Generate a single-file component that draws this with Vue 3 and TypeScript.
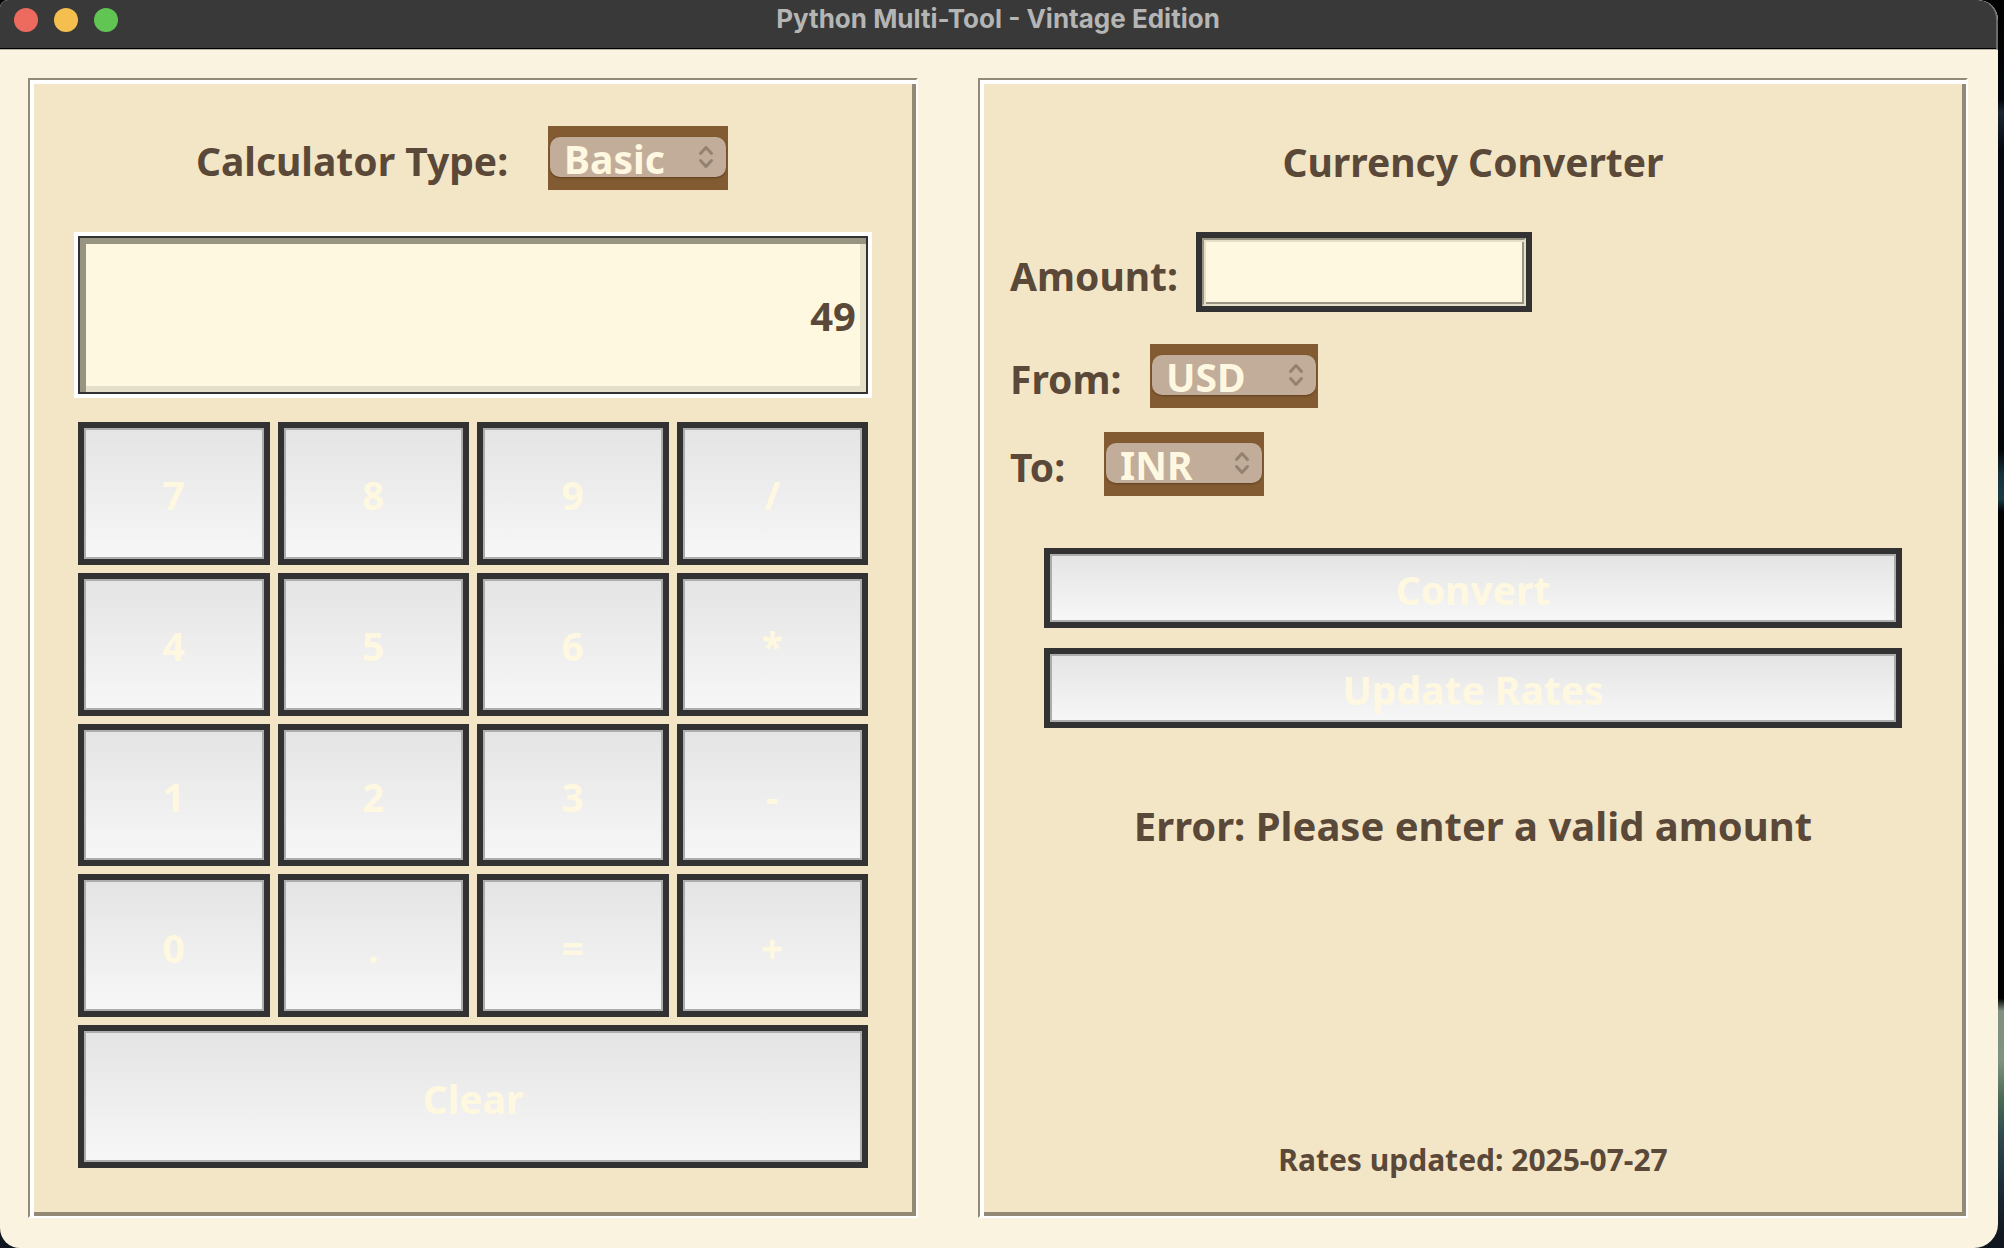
<script setup lang="ts">
import { ref } from 'vue'

const calculatorTypes = ['Basic', 'Scientific']
const currencies = ['USD', 'INR', 'EUR', 'GBP', 'JPY']
const keys = ['7', '8', '9', '/', '4', '5', '6', '*', '1', '2', '3', '-', '0', '.', '=', '+']

const calculatorType = ref('Basic')
const display = ref('49')
const amount = ref('')
const fromCurrency = ref('USD')
const toCurrency = ref('INR')
const result = ref('Error: Please enter a valid amount')
const ratesDate = '2025-07-27'

function press(key: string) {
  if (key === '=') return
  display.value += key
}

function clearDisplay() {
  display.value = ''
}

function convert() {
  if (!Number(amount.value)) result.value = 'Error: Please enter a valid amount'
}
</script>

<template>
  <div class="desktop">
    <div class="window">
      <header class="titlebar">
        <div class="lights">
          <button class="light close" type="button" aria-label="Close"></button>
          <button class="light minimize" type="button" aria-label="Minimize"></button>
          <button class="light zoom" type="button" aria-label="Zoom"></button>
        </div>
        <h1 class="title">Python Multi-Tool - Vintage Edition</h1>
      </header>

      <main class="content">
        <section class="panel calculator">
          <div class="type-row">
            <label for="calc-type">Calculator Type:</label>
            <div class="picker wide">
              <select id="calc-type" v-model="calculatorType">
                <option v-for="type in calculatorTypes" :key="type">{{ type }}</option>
              </select>
              <svg class="arrows" viewBox="0 0 16 24" aria-hidden="true">
                <path d="M2.5 8.5 8 2.5 13.5 8.5M2.5 15.5 8 21.5 13.5 15.5" />
              </svg>
            </div>
          </div>

          <div class="display-frame">
            <input v-model="display" class="display" type="text" aria-label="Display" />
          </div>

          <div class="keypad">
            <button v-for="key in keys" :key="key" class="key" type="button" @click="press(key)">{{ key }}</button>
            <button class="key clear" type="button" @click="clearDisplay">Clear</button>
          </div>
        </section>

        <section class="panel converter">
          <h2 class="heading">Currency Converter</h2>

          <div class="field">
            <label class="amount-label" for="amount">Amount:</label>
            <div class="amount-frame">
              <input id="amount" v-model="amount" class="amount" type="text" />
            </div>
          </div>
          <div class="field">
            <label class="from-label" for="from">From:</label>
            <div class="picker medium">
              <select id="from" v-model="fromCurrency">
                <option v-for="code in currencies" :key="code">{{ code }}</option>
              </select>
              <svg class="arrows" viewBox="0 0 16 24" aria-hidden="true">
                <path d="M2.5 8.5 8 2.5 13.5 8.5M2.5 15.5 8 21.5 13.5 15.5" />
              </svg>
            </div>
          </div>
          <div class="field">
            <label class="to-label" for="to">To:</label>
            <div class="picker narrow">
              <select id="to" v-model="toCurrency">
                <option v-for="code in currencies" :key="code">{{ code }}</option>
              </select>
              <svg class="arrows" viewBox="0 0 16 24" aria-hidden="true">
                <path d="M2.5 8.5 8 2.5 13.5 8.5M2.5 15.5 8 21.5 13.5 15.5" />
              </svg>
            </div>
          </div>

          <div class="actions">
            <button class="key" type="button" @click="convert">Convert</button>
            <button class="key" type="button">Update Rates</button>
          </div>

          <p class="result">{{ result }}</p>
          <p class="updated">Rates updated: {{ ratesDate }}</p>
        </section>
      </main>
    </div>
  </div>
</template>

<style>
body {
  margin: 0;
  background: #000;
}
</style>

<style scoped>
.desktop {
  box-sizing: border-box;
  min-height: 100vh;
  padding-right: 6px;
  display: flex;
  background: linear-gradient(
    180deg, #000 0%, #02060b 8%, #1a2634 9%, #04080e 12%, #05090f 20%, #020508 36%, #16323c 38%, #1a3a44 40%,
    #010203 41%, #020406 52%, #000 54%, #000 80%, #80917f 81%, #7f937f 85%, #4b6b55 88%, #2f4a50 91%,
    #1b2c38 95%, #10161f 99%
  );
}

.window {
  flex: 1;
  display: flex;
  flex-direction: column;
  border-radius: 8px 20px 24px 20px;
  overflow: hidden;
  background: #faf3e0;
  color: #5a4838;
  font-family: "Noto Sans", sans-serif;
  font-size: 39px;
  font-weight: 700;
  line-height: 48px;
}

.titlebar {
  box-sizing: border-box;
  height: 50px;
  display: grid;
  grid-template-columns: 1fr auto 1fr;
  align-items: start;
  background: #383938;
  border-bottom: 1px solid #b9b4a6;
  border-right: 2px solid #6b6b6b;
  border-top-right-radius: 20px;
  box-shadow: inset 0 -1px #000;
}

.lights {
  display: flex;
  gap: 16px;
  padding: 8px 14px;
}

.light {
  width: 24px;
  height: 24px;
  padding: 0;
  border: 0;
  border-radius: 50%;
}

.close { background: #ed6a5e; }
.minimize { background: #f5bf4f; }
.zoom { background: #61c554; }

.title {
  margin: 0;
  font-family: Inter, sans-serif;
  font-size: 26px;
  font-weight: 700;
  line-height: 38px;
  color: #b4b5b4;
}

.content {
  flex: 1;
  display: grid;
  grid-template-columns: 89fr 99fr;
  gap: 60px;
  padding: 28px 30px 30px 28px;
}

.panel {
  box-sizing: border-box;
  min-width: 0;
  display: flex;
  flex-direction: column;
  border: 2px solid;
  border-color: #928a76 #fff #fff #928a76;
  box-shadow: inset 4px 4px #fff, inset -4px -4px #928a76;
  background: #f3e6c6;
}

.calculator {
  padding: 46px 48px 48px;
}

.converter {
  padding: 46px 30px 32px;
}

.type-row {
  display: flex;
  align-items: center;
  justify-content: center;
  gap: 40px;
  padding-right: 22px;
  margin-bottom: 42px;
}

label {
  padding-top: 6px;
}

.picker {
  position: relative;
  box-sizing: border-box;
  height: 64px;
  padding: 11px 2px 13px;
  background: #835b32;
}

.wide { width: 180px; }
.medium { width: 168px; }
.narrow { width: 160px; }

select {
  appearance: none;
  display: block;
  box-sizing: border-box;
  width: 100%;
  height: 40px;
  padding: 2px 40px 0 14px;
  border: 0;
  border-radius: 10px;
  background: #c1ad99;
  box-shadow: 0 1px 2px rgba(60, 35, 10, 0.5);
  color: #fff8e1;
  font: inherit;
  line-height: 40px;
}

.arrows {
  position: absolute;
  top: 19px;
  right: 14px;
  width: 16px;
  height: 24px;
  fill: none;
  stroke: #938272;
  stroke-width: 3;
  stroke-linecap: round;
  stroke-linejoin: round;
  pointer-events: none;
}

.display-frame {
  display: flex;
  border: 4px solid #fff;
  margin: 0 -4px 24px;
}

input {
  box-sizing: border-box;
  min-width: 0;
  border: 0;
  border-radius: 0;
  outline: 0;
  background: #fff8e1;
  color: inherit;
  font: inherit;
}

.display {
  flex: 1;
  height: 158px;
  padding: 0 10px;
  border: 2px solid #323232;
  box-shadow: inset 6px 6px #989482, inset -6px -6px #e4dfc8;
  font-size: 40px;
  text-align: right;
}

.keypad {
  flex: 1;
  display: grid;
  grid-template-columns: repeat(4, 1fr);
  grid-auto-rows: 1fr;
  gap: 8px;
}

.key {
  padding: 4px 0 0;
  border: 6px solid #323232;
  background: linear-gradient(#e4e4e4, #f7f7f7);
  box-shadow: inset 0 0 0 2px #adadad;
  color: #fff8e1;
  font: inherit;
}

.clear {
  grid-column: 1 / -1;
}

.heading {
  margin: 12px 0 46px;
  font-size: inherit;
  line-height: 48px;
  text-align: center;
}

.field {
  display: flex;
  align-items: center;
  margin-bottom: 24px;
}

.amount-label { width: 186px; }
.from-label { width: 140px; }
.to-label { width: 94px; }

.amount-frame {
  display: flex;
  border: 6px solid #323232;
  margin-bottom: 8px;
}

.amount-label {
  padding-top: 0;
}

.amount {
  width: 324px;
  height: 68px;
  padding: 0 10px;
  border: 2px solid;
  border-color: #989482 #e4dfc8 #e4dfc8 #989482;
  box-shadow: inset 2px 2px #e4dfc8, inset -2px -2px #989482;
}

.actions {
  display: grid;
  grid-auto-rows: 80px;
  gap: 20px;
  margin: 28px 34px 0;
}

.result {
  margin: 74px 0 0;
  font-size: 40px;
  text-align: center;
}

.updated {
  margin: auto 0 0;
  font-size: 30px;
  text-align: center;
}
</style>
